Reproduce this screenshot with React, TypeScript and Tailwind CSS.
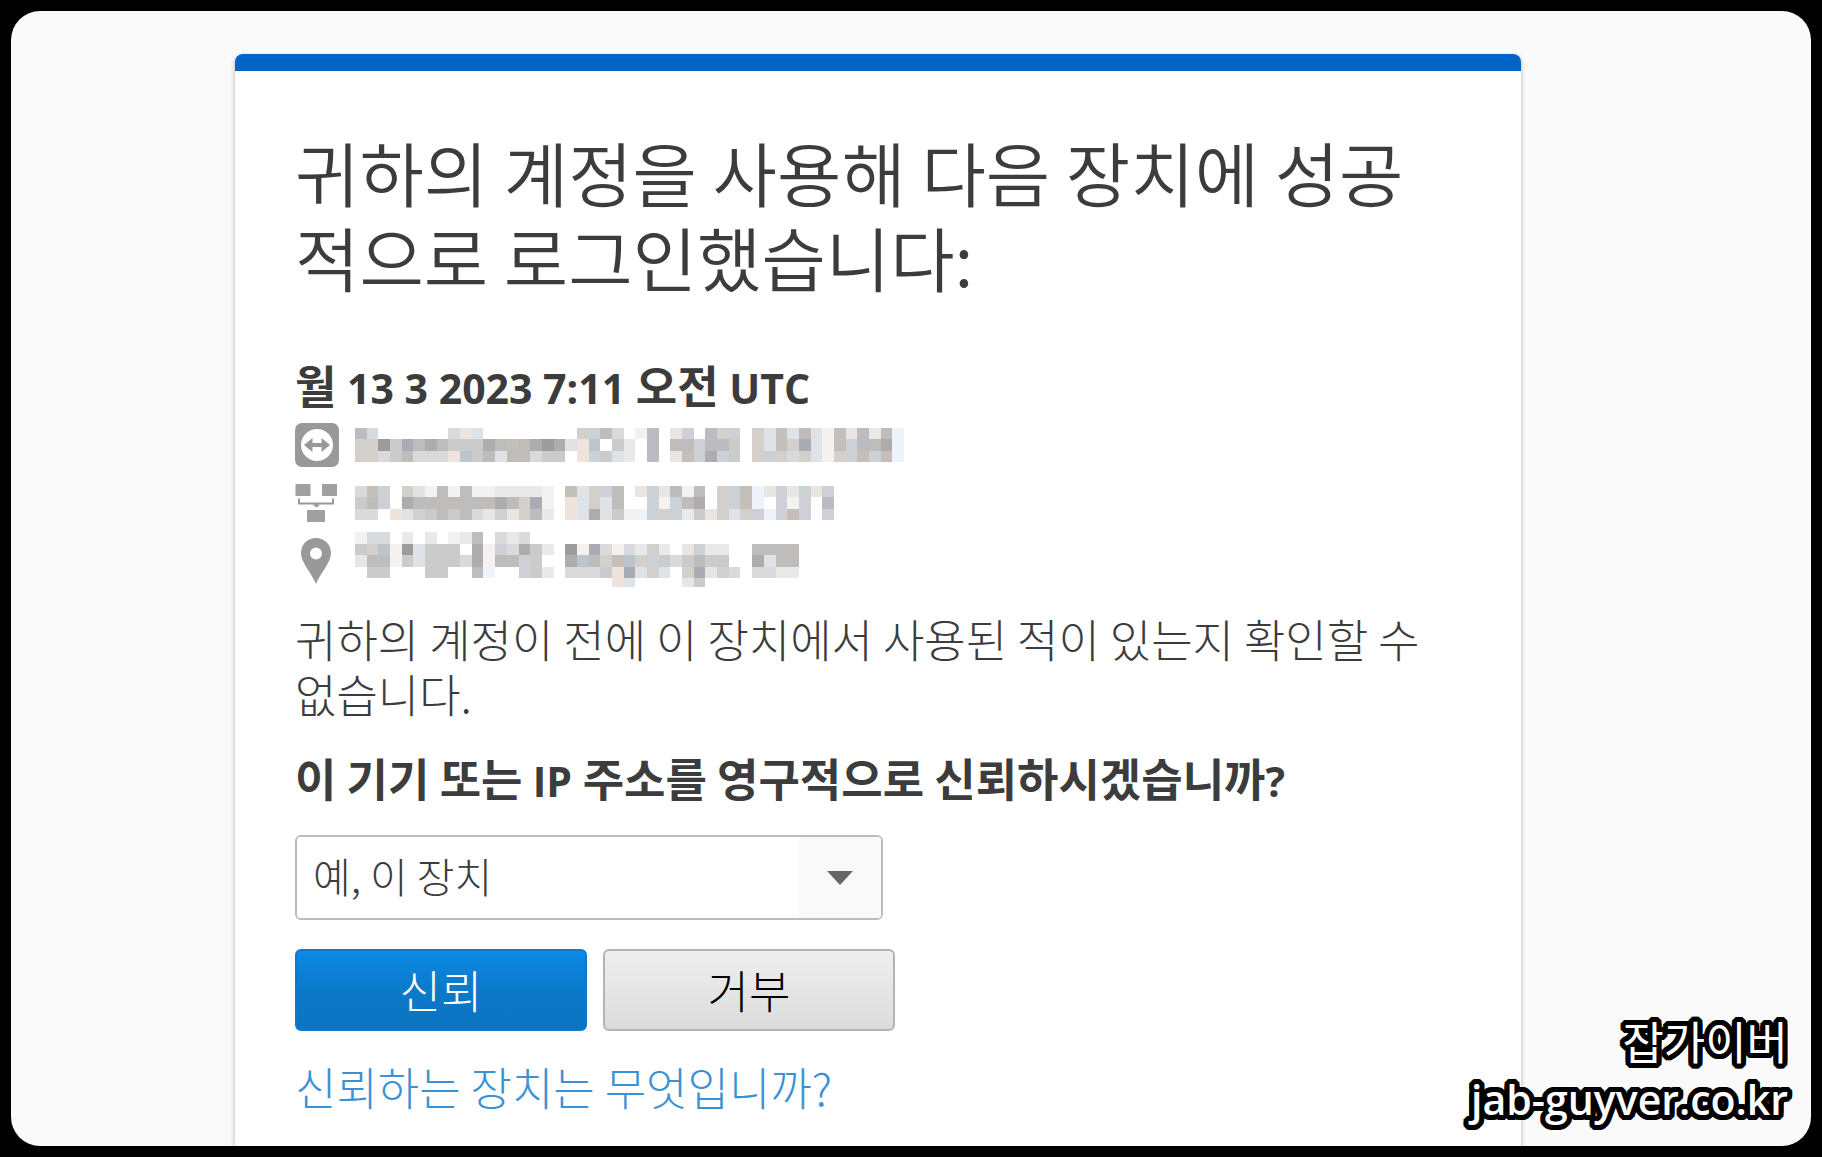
import React from "react";

const MOSAIC_COLORS: Record<string, string> = {
  a: "#9c9c9c",
  b: "#aeacac",
  c: "#bebdbc",
  d: "#cbcbcb",
  e: "#d9dadb",
  f: "#e9e9e9",
  g: "#f4f2f0",
  h: "#a9adb3",
  p: "#bcc4cc",
  q: "#ccd1d6",
  r: "#dfe3e8",
  s: "#eff4fa",
  u: "#bbbbc1",
  v: "#cecfd7",
  w: "#c5bfba",
  x: "#d3cfcb",
  y: "#e8e5e2",
  z: "#efe4dd",
};

const COLUMNS = 47;

const ID_ROWS = [
  "",
  "ue......ezr........xqce.gu.yv.uxq.xrwrcrgwyufcs",
  "xxadhcbcdddbcwcbabrzp.df.u.ccquud.xrwxhrgwqucbs",
  "xxedceeezpdcrccedd.zqdrf.u.ywqbqd.xqxexrgxqwqws",
];

const IP_ROWS = [
  "",
  "ewq.xrgcgcggffffg.wrxvc.yqyugc.xqwsyvyqyv",
  "dcv.bcccccccbcxhg.zrxrc..qgqcb.xqws.vgv.u",
  "ee.zrqdcdceyqyxcf.zrbrdgsqxqfdyxrxvsvwv.v",
];

const LOCATION_ROWS = [
  "gee.f.f.gfc.efe",
  "dxpgarddd.bgvebdf.aghegefxf.yqff..cccc",
  "yccgdrdddebgccvd..bpcxwpxqdedcdd..brcc",
  ".dd...dd..cs..vdf.eeedzhrxr.xhyqe.eeff",
  "......................zr....yd",
];

function Mosaic({ rows, label }: { rows: string[]; label: string }) {
  return (
    <svg
      role="img"
      aria-label={label}
      viewBox={`0 0 ${COLUMNS} 5`}
      preserveAspectRatio="none"
      shapeRendering="crispEdges"
      className="h-[58px] w-[549px] shrink-0"
    >
      {rows.flatMap((row, y) =>
        row.split("").map((key, x) =>
          key === "." ? null : (
            <rect
              key={`${x}-${y}`}
              x={x}
              y={y}
              width={1}
              height={y === 4 ? 0.7 : 1}
              fill={MOSAIC_COLORS[key]}
            />
          ),
        ),
      )}
    </svg>
  );
}

function RemoteIcon() {
  return (
    <svg viewBox="0 0 44 44" className="h-11 w-11" aria-hidden="true">
      <rect width="44" height="44" rx="7" fill="#999" />
      <circle cx="22" cy="22" r="16" fill="#fff" />
      <path d="M9 22l8.500-7v5h9v-5l8.500 7-8.500 7v-5h-9v5z" fill="#999" />
    </svg>
  );
}

function NetworkIcon() {
  return (
    <svg viewBox="0 0 44 40" className="h-10 w-11" aria-hidden="true">
      <g fill="#a0a0a0">
        <rect x="0.5" y="1" width="15" height="12" />
        <rect x="27" y="1" width="15" height="12" />
        <rect x="12" y="27" width="18" height="12" />
      </g>
      <path
        d="M4 15.5v5h34v-5M21.500 20v4"
        fill="none"
        stroke="#999"
        strokeWidth="2"
      />
      <path d="M17.500 21.500h8l-4 3z" fill="#999" />
    </svg>
  );
}

function PinIcon() {
  return (
    <svg viewBox="0 0 44 48" className="h-12 w-11" aria-hidden="true">
      <path
        fillRule="evenodd"
        d="M21 1C12.500 1 6 7.500 6 16c0 10.500 11.500 21 15 31 3.500-10 15-20.500 15-31C36 7.500 29.500 1 21 1zm0 9.500a6 6 0 1 1 0 12 6 6 0 0 1 0-12z"
        fill="#999"
      />
    </svg>
  );
}

function DetailRow({
  icon,
  rows,
  label,
}: {
  icon: React.ReactNode;
  rows: string[];
  label: string;
}) {
  return (
    <li className="flex h-[58px] items-center gap-4">
      {icon}
      <Mosaic rows={rows} label={label} />
    </li>
  );
}

export default function App() {
  return (
    <div className="min-h-screen bg-black p-[11px] font-['Noto_Sans_CJK_KR',sans-serif] text-[#3c3c3c]">
      <main className="relative flex min-h-[calc(100vh-22px)] overflow-hidden rounded-[29px] bg-[#fafafa] pt-[43px] pl-56">
        <section className="w-full max-w-[1286px] rounded-t-lg border-t-[17px] border-[#0064c8] bg-white px-[60px] pt-[58px] shadow-[0_2px_5px_rgba(0,0,0,0.3)]">
          <h1 className="text-[70px] leading-[85px] font-[350]">
            귀하의 계정을 사용해 다음 장치에 성공적으로 로그인했습니다:
          </h1>

          <p className="mt-[58px] text-[45px] leading-[56px] font-bold">
            월
            <span className="font-['Open_Sans'] text-[41px]"> 13 3 2023 7:11 </span>
            오전
            <span className="font-['Open_Sans'] text-[41px]"> UTC</span>
          </p>
          <ul>
            <DetailRow icon={<RemoteIcon />} rows={ID_ROWS} label="ID" />
            <DetailRow icon={<NetworkIcon />} rows={IP_ROWS} label="IP" />
            <DetailRow icon={<PinIcon />} rows={LOCATION_ROWS} label="위치" />
          </ul>

          <p className="mt-[21px] text-[45px] leading-[55px] font-light">
            귀하의 계정이 전에 이 장치에서 사용된 적이 있는지 확인할 수 없습니다.
          </p>

          <form onSubmit={(event) => event.preventDefault()}>
            <label
              htmlFor="trust-scope"
              className="mt-[29px] block text-[45px] leading-[55px] font-bold"
            >
              이 기기 또는 <span className="font-['Open_Sans'] text-[41px]">IP </span>
              주소를 영구적으로 신뢰하시겠습니까
              <span className="font-['Open_Sans'] text-[41px]">?</span>
            </label>
            <div className="relative mt-[26px] h-[85px] w-[588px] overflow-hidden rounded-md border-2 border-[#bcbcbc]">
              <select
                id="trust-scope"
                className="h-full w-full appearance-none bg-white px-4 pb-1 text-[41px] font-light"
              >
                <option>예, 이 장치</option>
              </select>
              <span className="pointer-events-none absolute inset-y-0 right-0 flex w-[82px] items-center justify-center bg-[#f9f9f9]">
                <svg viewBox="0 0 26 14" className="h-[14px] w-[26px]" aria-hidden="true">
                  <path d="M0 0h26L13 14z" fill="#666" />
                </svg>
              </span>
            </div>
            <div className="mt-[29px] flex gap-4">
              <button
                type="submit"
                className="h-[82px] w-[292px] rounded-md border-2 border-[#0f78c8] bg-linear-to-b from-[#0b8ae6] via-[#0c79c9] to-[#0a74c2] text-[45px] leading-[60px] font-light text-white"
              >
                신뢰
              </button>
              <button
                type="button"
                className="h-[82px] w-[292px] rounded-md border-2 border-[#b4b4b4] bg-linear-to-b from-[#efefef] to-[#dcdcdc] text-[45px] leading-[60px] font-light text-black"
              >
                거부
              </button>
            </div>
          </form>

          <a
            href="#trusted-devices"
            className="mt-[26px] block w-fit text-[45px] leading-[60px] font-light text-[#3a92d4]"
          >
            신뢰하는 장치는 무엇입니까?
          </a>
        </section>

        <div className="absolute right-[23px] bottom-[18px] text-right text-white [text-shadow:5px_0_#000,-5px_0_#000,0_5px_#000,0_-5px_#000,4px_3px_#000,4px_-3px_#000,-4px_3px_#000,-4px_-3px_#000,3px_4px_#000,3px_-4px_#000,-3px_4px_#000,-3px_-4px_#000,5px_2px_#000,5px_-2px_#000,-5px_2px_#000,-5px_-2px_#000,2px_5px_#000,-2px_5px_#000,2px_-5px_#000,-2px_-5px_#000,2px_2px_#000,-2px_2px_#000,2px_-2px_#000,-2px_-2px_#000]">
          <p className="text-[45px] leading-[58px]">잡가이버</p>
          <p className="font-['Open_Sans'] text-[41px] leading-[58px] font-semibold">
            jab-guyver.co.kr
          </p>
        </div>
      </main>
    </div>
  );
}
